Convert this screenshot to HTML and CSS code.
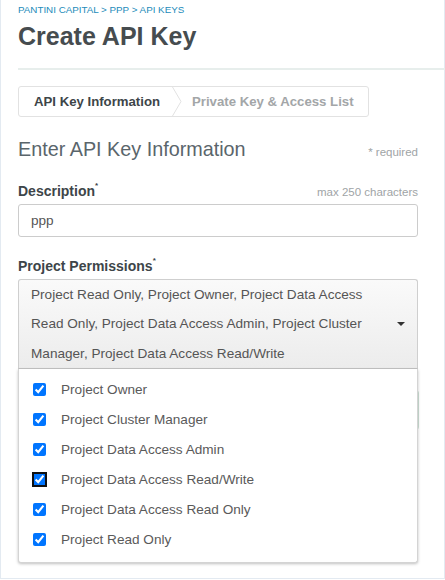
FILE: index.html
```html
<!DOCTYPE html>
<html>
<head>
<meta charset="utf-8">
<link rel="stylesheet" href="styles.css">
</head>
<body>
<div class="page">
  <div class="crumbs">PANTINI CAPITAL &gt; PPP &gt; API KEYS</div>
  <h1 class="title">Create API Key</h1>
  <div class="rule"></div>
  <div class="tabs">
    <div class="tab tab-active">API Key Information</div>
    <svg class="chev" width="10" height="29" viewBox="0 0 10 29"><path d="M0.5 0 L9 14.5 L0.5 29" fill="none" stroke="#e2e2e2" stroke-width="1"/></svg>
    <div class="tab tab-next">Private Key &amp; Access List</div>
  </div>
  <div class="section-head">
    <h2 class="section-title">Enter API Key Information</h2>
    <span class="hint">* required</span>
  </div>
  <div class="label-row">
    <label class="label">Description<sup>*</sup></label>
    <span class="hint">max 250 characters</span>
  </div>
  <div class="input">ppp</div>
  <div class="label-row label-row-perm">
    <label class="label">Project Permissions<sup>*</sup></label>
  </div>
  <div class="select-wrap">
    <div class="select">
      <span class="select-text">Project Read Only, Project Owner, Project Data Access Read Only, Project Data Access Admin, Project Cluster Manager, Project Data Access Read/Write</span>
      <span class="caret"></span>
    </div>
    <div class="behind"></div>
    <ul class="menu">
      <li class="opt"><input type="checkbox" checked><span>Project Owner</span></li>
      <li class="opt"><input type="checkbox" checked><span>Project Cluster Manager</span></li>
      <li class="opt"><input type="checkbox" checked><span>Project Data Access Admin</span></li>
      <li class="opt"><input type="checkbox" class="focused" checked><span>Project Data Access Read/Write</span></li>
      <li class="opt"><input type="checkbox" checked><span>Project Data Access Read Only</span></li>
      <li class="opt"><input type="checkbox" checked><span>Project Read Only</span></li>
    </ul>
  </div>
</div>
</body>
</html>
```

FILE: styles.css
```css
* { box-sizing: border-box; }
html, body { margin: 0; padding: 0; background: #fff; }
body {
  font-family: "Liberation Sans", Arial, sans-serif;
  width: 445px;
  height: 580px;
  overflow: hidden;
}
.page {
  height: 579px;
  border-left: 1px solid #e3eaf1;
  border-right: 1px solid #e3eaf1;
  border-bottom: 1px solid #e3eaf1;
  padding: 4px 0 0 17px;
}
.crumbs {
  font-size: 9.8px;
  line-height: 12px;
  color: #1d8bba;
}
.title {
  margin: 6px 0 0;
  font-size: 25px;
  line-height: 29px;
  font-weight: bold;
  color: #464c4f;
}
.rule {
  margin-top: 17px;
  height: 2px;
  background: #e7eeec;
  margin-right: -1px;
}
.tabs {
  margin-top: 16px;
  display: inline-flex;
  align-items: stretch;
  border: 1px solid #e2e2e2;
  border-radius: 3px;
  height: 31px;
}
.tab {
  font-size: 13.2px;
  font-weight: bold;
  line-height: 29px;
  white-space: nowrap;
}
.tab-active { color: #3d4549; padding: 0 12px 0 15px; }
.tab-next { color: #a3a6a8; padding: 0 14px 0 10px; }
.chev { display: block; }
.section-head, .label-row {
  width: 400px;
  display: flex;
  justify-content: space-between;
  align-items: baseline;
}
.section-head { margin-top: 20px; }
.section-title {
  margin: 0;
  font-size: 19.8px;
  line-height: 24px;
  font-weight: normal;
  color: #5a656b;
}
.hint {
  font-size: 11.5px;
  color: #a0a4a6;
}
.label-row { margin-top: 22px; }
.label {
  font-size: 14px;
  line-height: 17px;
  font-weight: bold;
  color: #3d4549;
}
.label sup {
  font-size: 8px;
  vertical-align: top;
  line-height: 8px;
  position: relative;
  top: -1px;
}
.input {
  margin-top: 4px;
  width: 400px;
  height: 33px;
  border: 1px solid #cccccc;
  border-radius: 3px;
  padding: 0 12px;
  font-size: 13.6px;
  line-height: 31px;
  color: #555;
}
.label-row-perm { margin-top: 21px; }
.select-wrap {
  position: relative;
  width: 400px;
  margin-top: 4px;
}
.select {
  display: flex;
  align-items: center;
  height: 90px;
  border: 1px solid #cfcfcf;
  border-bottom-color: #c4c4c4;
  border-radius: 3px 3px 0 0;
  background: linear-gradient(#fafafa, #ececec);
  padding: 0 12px 0 12px;
  box-shadow: 0 1px 0 rgba(0,0,0,0.06);
}
.select-text {
  flex: 1;
  font-size: 13.6px;
  line-height: 29.5px;
  color: #555;
  padding-right: 18px;
}
.caret {
  width: 0;
  height: 0;
  border-left: 4px solid transparent;
  border-right: 4px solid transparent;
  border-top: 4px solid #333;
}
.behind {
  margin-top: 21px;
  width: 401px;
  height: 40px;
  border: 1px solid #cfe3d8;
  border-radius: 3px;
}
.menu {
  position: absolute;
  left: 0;
  top: 90px;
  width: 400px;
  margin: 0;
  padding: 5px 0 8px;
  list-style: none;
  background: #fff;
  border: 1px solid #d4d4d4;
  border-top: none;
  border-radius: 0 0 3px 3px;
  box-shadow: 0 1px 3px rgba(0,0,0,0.25);
}
.opt {
  display: flex;
  align-items: center;
  height: 30px;
  padding-left: 14px;
  font-size: 13.6px;
  color: #5a5a5a;
}
.opt input {
  width: 13px;
  height: 13px;
  margin: 0 15px 0 0;
  flex: none;
}
.opt input.focused {
  outline: 2px solid #111;
  outline-offset: -1px;
  border-radius: 3px;
}
```
